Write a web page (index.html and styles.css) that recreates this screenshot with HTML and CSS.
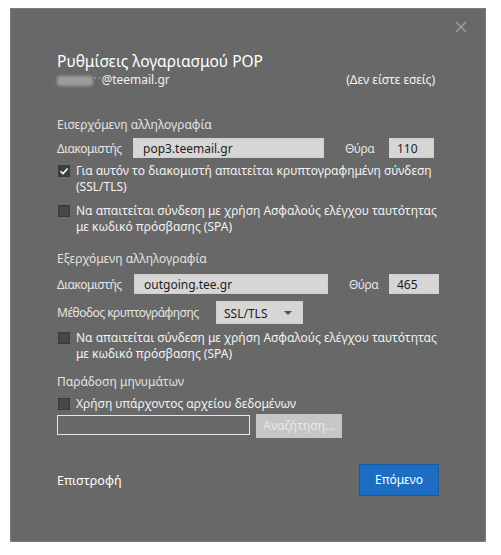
FILE: index.html
```html
<!DOCTYPE html>
<html lang="el">

<head>
    <meta charset="UTF-8">
    <meta name="viewport" content="width=device-width, initial-scale=1.0">
    <title>Ρυθμίσεις λογαριασμού POP</title>

    <link rel="stylesheet" href="styles.css">
</head>

<body>
    <div class="dialog">
        <a href="javascript:;" class="close">
            <svg width="12" height="12" viewBox="0 0 12 12">
                <path d="M1 1L11 11M11 1L1 11" stroke="#a0a0a0" stroke-width="1.3" fill="none" />
            </svg>
        </a>

        <h1 class="title">Ρυθμίσεις λογαριασμού POP</h1>
        <div class="account">
            <span><span class="blur"></span><span class="marks">' '</span>@teemail.gr</span>
            <a href="javascript:;" class="notyou">(Δεν είστε εσείς)</a>
        </div>

        <!-- εισερχόμενη -->
        <div class="heading first">Εισερχόμενη αλληλογραφία</div>
        <div class="row server">
            <label class="lbl host-lbl">Διακομιστής</label>
            <span class="field host">pop3.teemail.gr</span>
            <label class="lbl port-lbl">Θύρα</label>
            <span class="field port">110</span>
        </div>
        <div class="check ssl">
            <span class="box on">
                <svg width="10" height="10" viewBox="0 0 10 10">
                    <path d="M1.5 5.2L4 7.6L8.6 2.4" stroke="#fff" stroke-width="1.5" fill="none" />
                </svg>
            </span>
            <span>Για αυτόν το διακομιστή απαιτείται κρυπτογραφημένη σύνδεση<br>(SSL/TLS)</span>
        </div>
        <div class="check spa">
            <span class="box"></span>
            <span>Να απαιτείται σύνδεση με χρήση Ασφαλούς ελέγχου ταυτότητας<br>με κωδικό πρόσβασης (SPA)</span>
        </div>

        <!-- εξερχόμενη -->
        <div class="heading second">Εξερχόμενη αλληλογραφία</div>
        <div class="row server out">
            <label class="lbl host-lbl">Διακομιστής</label>
            <span class="field host">outgoing.tee.gr</span>
            <label class="lbl port-lbl">Θύρα</label>
            <span class="field port">465</span>
        </div>
        <div class="row method">
            <label class="lbl method-lbl">Μέθοδος κρυπτογράφησης</label>
            <span class="field select">SSL/TLS<span class="caret"></span></span>
        </div>
        <div class="check spa2">
            <span class="box"></span>
            <span>Να απαιτείται σύνδεση με χρήση Ασφαλούς ελέγχου ταυτότητας<br>με κωδικό πρόσβασης (SPA)</span>
        </div>

        <!-- παράδοση -->
        <div class="heading third">Παράδοση μηνυμάτων</div>
        <div class="check data">
            <span class="box"></span>
            <span>Χρήση υπάρχοντος αρχείου δεδομένων</span>
        </div>
        <div class="row file">
            <span class="path"></span>
            <span class="browse">Αναζήτηση...</span>
        </div>

        <div class="footer">
            <a href="javascript:;" class="back">Επιστροφή</a>
            <a href="javascript:;" class="next">Επόμενο</a>
        </div>
    </div>
</body>

</html>
```

FILE: styles.css
```css
* {
    padding: 0;
    margin: 0;
    box-sizing: border-box;
}

body {
    background: #fff;
    font-family: "Noto Sans", "Open Sans", sans-serif;
    font-size: 12px;
    color: #f2f2f2;
}

.dialog {
    position: relative;
    width: 476px;
    height: 534px;
    margin: 8px 0 0 10px;
    padding: 0 50px 0 46px;
    background: #686868;
    border: 1px solid #7c7c7c;
}

.close {
    position: absolute;
    top: 12px;
    right: 18px;
    display: block;
    width: 12px;
    height: 12px;
}

.close svg {
    display: block;
}

.title {
    margin-top: 42px;
    font-size: 15.5px;
    font-weight: normal;
    line-height: 20px;
    color: #fff;
}

.account {
    display: flex;
    justify-content: space-between;
    line-height: 18px;
    color: #f0f0f0;
}

.blur {
    display: inline-block;
    vertical-align: middle;
    width: 36px;
    height: 10px;
    margin-right: 1px;
    background: #9c9c9c;
    border-radius: 3px;
    filter: blur(1.5px);
}

.marks {
    font-size: 9px;
    color: #bdbdbd;
    margin-right: 1px;
}

.notyou {
    color: #f4f4f4;
    text-decoration: none;
}

.heading {
    line-height: 18px;
    color: #e2e2e2;
}

.heading.first {
    margin-top: 26px;
}

.heading.second {
    margin-top: 15px;
}

.heading.third {
    margin-top: 11px;
}

.row {
    display: flex;
    align-items: center;
}

.lbl {
    flex: none;
    color: #e4e4e4;
    white-space: nowrap;
    letter-spacing: -0.5px;
}

.field {
    flex: none;
    display: block;
    height: 20px;
    line-height: 20px;
    padding-left: 9px;
    background: #d6d6d6;
    color: #1e1e1e;
    border: 1px solid #cfcfcf;
}

.server {
    margin-top: 4px;
}

.host-lbl {
    width: 76px;
}

.server .host {
    width: 191px;
}

.server .port-lbl {
    width: 44px;
    margin-left: 21px;
}

.server .port {
    width: 45px;
    padding-left: 7px;
}

.server.out {
    margin-top: 6px;
}

.server.out .host-lbl {
    width: 77px;
}

.server.out .host {
    width: 194px;
}

.server.out .port-lbl {
    width: 40px;
    margin-left: 21px;
}

.server.out .port {
    width: 50px;
}

.method {
    margin-top: 7px;
}

.method-lbl {
    width: 159px;
}

.select {
    position: relative;
    width: 87px;
    height: 23px;
    line-height: 23px;
    padding-left: 7px;
}

.caret {
    position: absolute;
    right: 10px;
    top: 9px;
    border-left: 4px solid transparent;
    border-right: 4px solid transparent;
    border-top: 4px solid #555;
}

.check {
    display: flex;
    align-items: flex-start;
    line-height: 16px;
    color: #f2f2f2;
    white-space: nowrap;
}

.box {
    flex: none;
    display: flex;
    align-items: center;
    justify-content: center;
    width: 12px;
    height: 12px;
    margin: 2px 6px 0 1px;
    background: #474747;
    border: 1px solid #3a3a3a;
}

.box.on {
    background: #3c3c3c;
}

.ssl {
    margin-top: 5px;
}

.spa {
    margin-top: 8px;
}

.spa2 {
    margin-top: 6px;
}

.data {
    margin-top: 5px;
}

.file {
    margin-top: 2px;
    align-items: flex-start;
}

.path {
    display: block;
    width: 193px;
    height: 20px;
    margin-top: 1px;
    border: 1px solid #e6e6e6;
}

.browse {
    display: block;
    width: 86px;
    height: 24px;
    line-height: 24px;
    margin-left: 6px;
    text-align: center;
    background: #c6c6c6;
    color: #e9e9e9;
}

.footer {
    display: flex;
    justify-content: space-between;
    align-items: center;
    margin-top: 26px;
    margin-right: -4px;
}

.back {
    color: #fff;
    text-decoration: none;
    font-size: 12.5px;
}

.next {
    display: block;
    width: 80px;
    height: 32px;
    line-height: 30px;
    text-align: center;
    background: #1c6ec2;
    border: 1px solid #145ca6;
    color: #fff;
    text-decoration: none;
}
```
